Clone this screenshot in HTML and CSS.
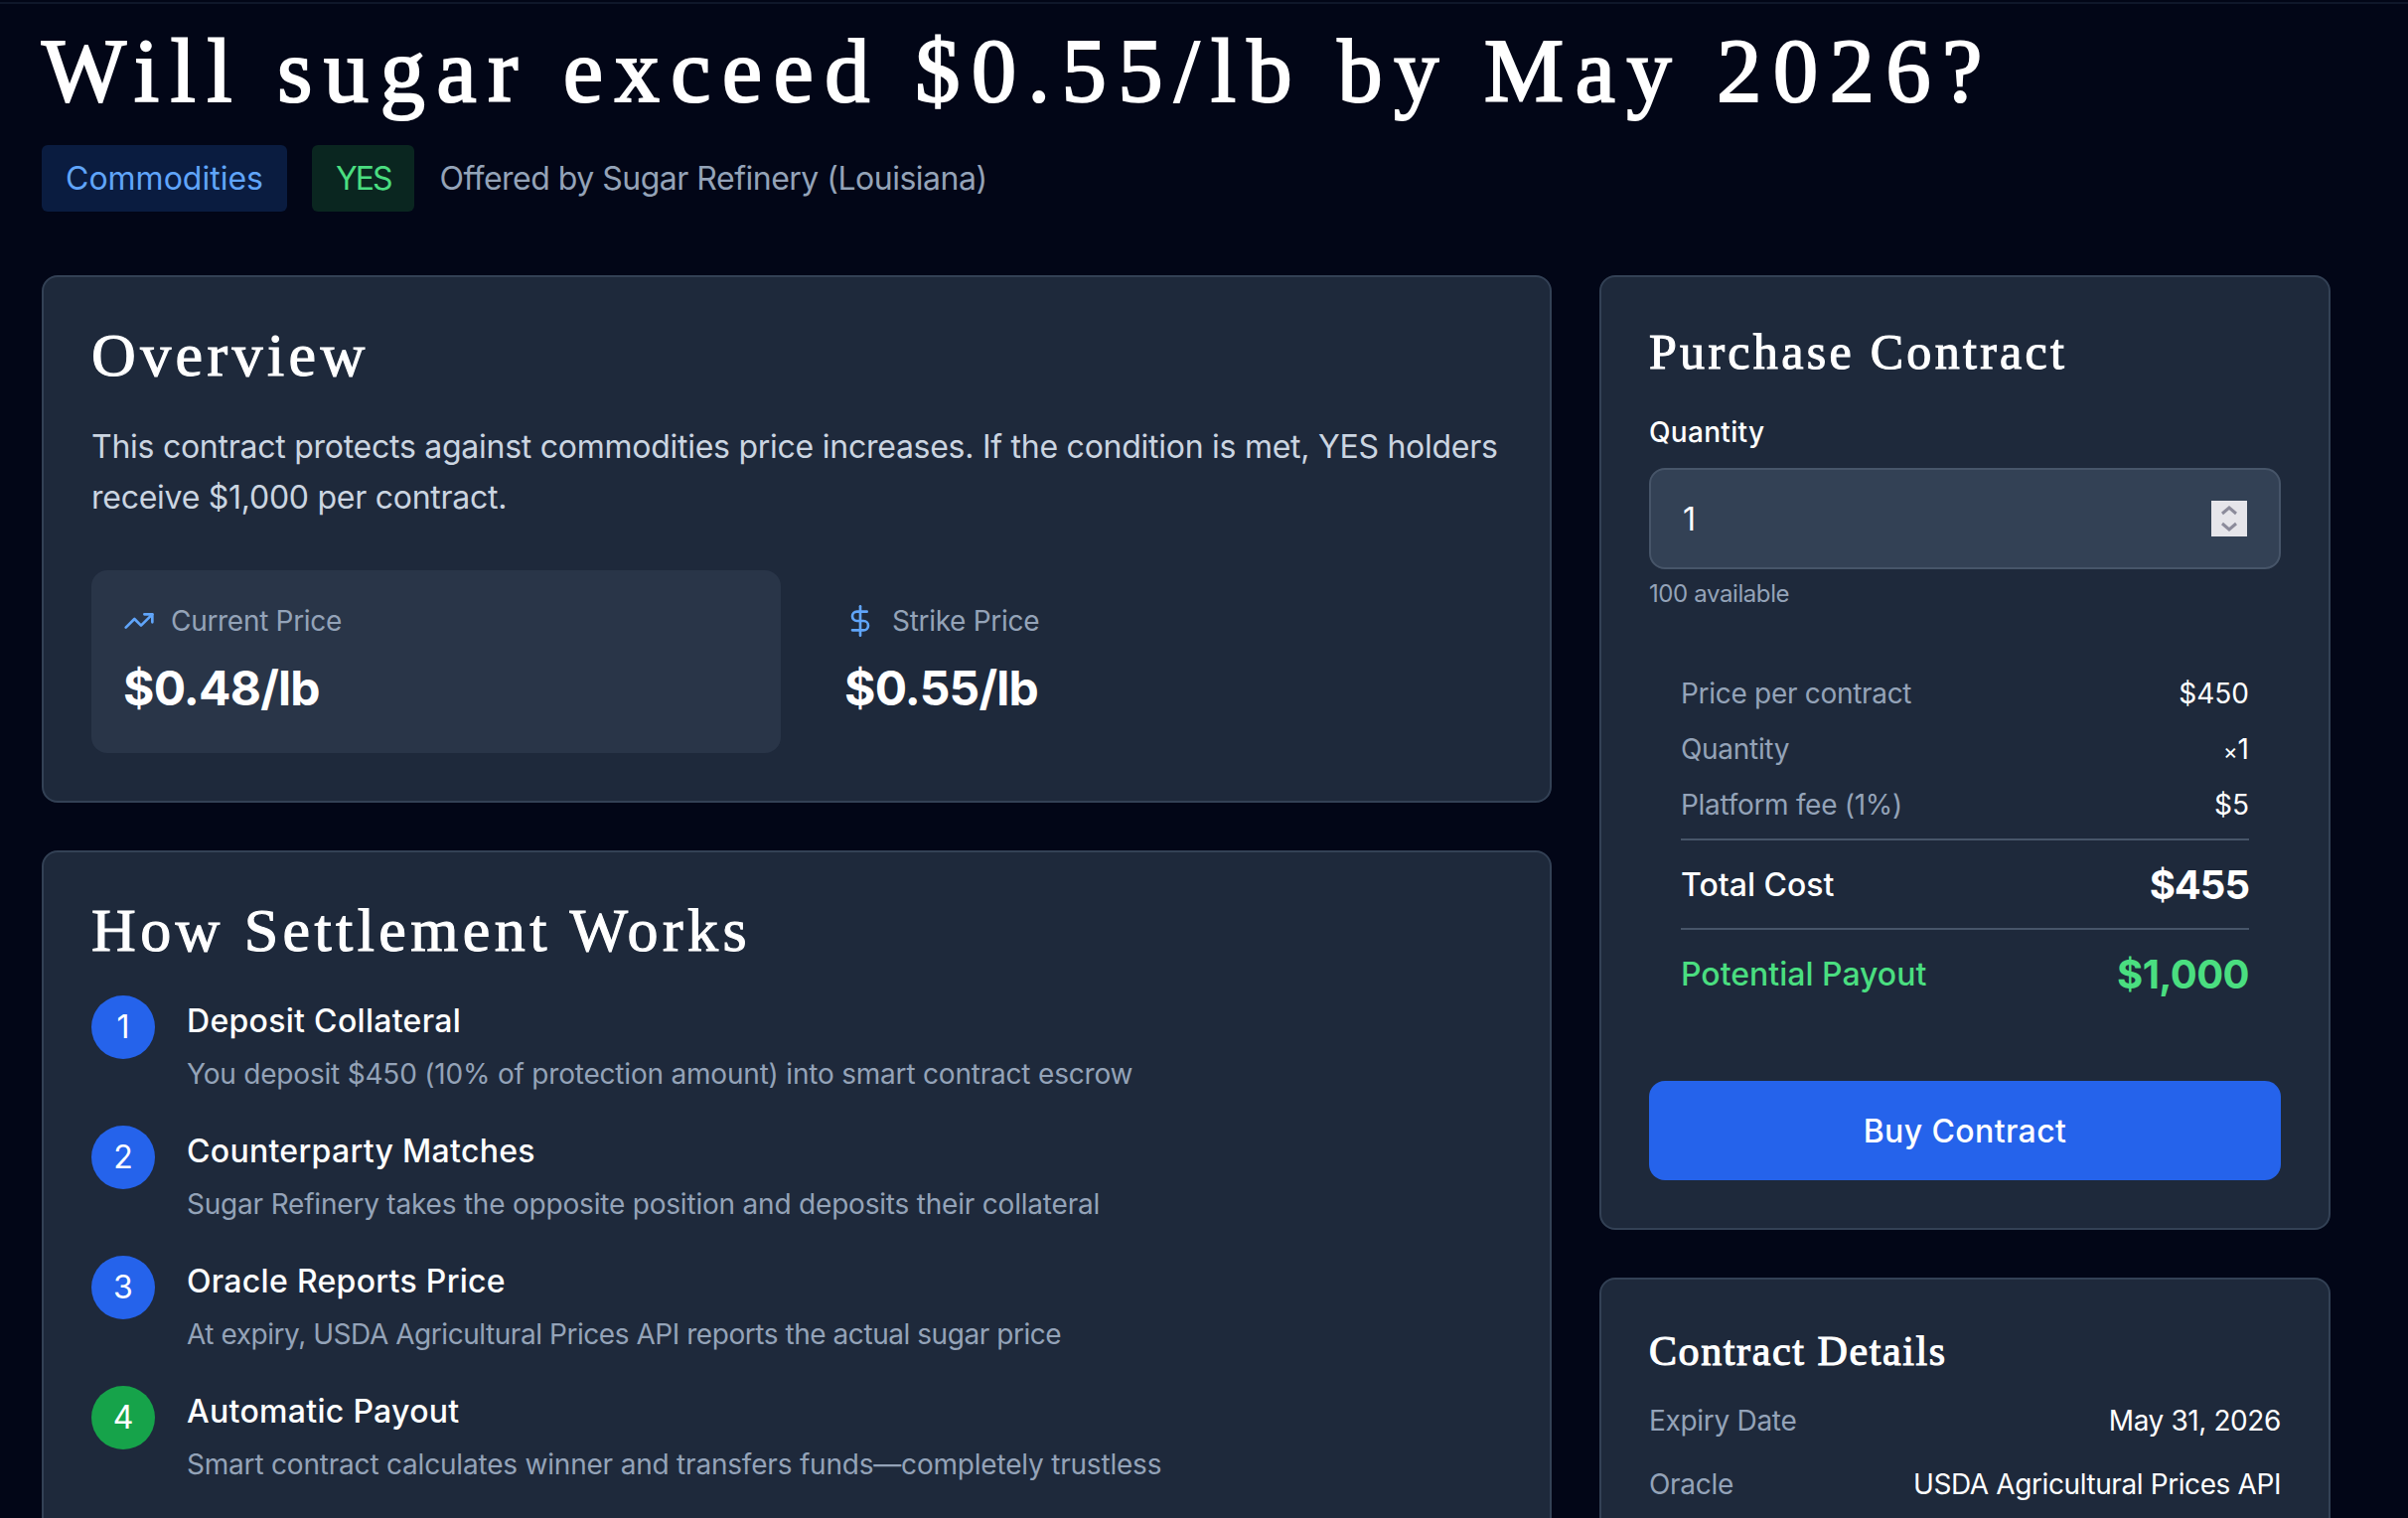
FILE: index.html
```html
<!doctype html>
<html lang="en">

<head>
  <meta charset="utf-8">
  <meta name="viewport" content="width=device-width, initial-scale=1">
  <link rel="stylesheet" href="styles.css">
  <title>Will sugar exceed $0.55/lb by May 2026?</title>
</head>

<body>
  <div class="top-line"></div>
  <div class="page">
    <h1 class="page-title">Will sugar exceed $0.55/lb by May 2026?</h1>
    <div class="meta">
      <span class="tag tag-blue">Commodities</span>
      <span class="tag tag-green">YES</span>
      <span class="offered">Offered by Sugar Refinery (Louisiana)</span>
    </div>

    <div class="columns">
      <div class="col">
        <section class="card">
          <h2 class="title-lg">Overview</h2>
          <p class="intro">This contract protects against commodities price increases. If the condition is met, YES holders receive $1,000 per contract.</p>
          <div class="stats">
            <div class="stat stat-filled">
              <div class="stat-label">
                <svg class="icon" viewBox="0 0 24 24"><polyline points="22 7 13.5 15.5 8.5 10.5 2 17" /><polyline points="16 7 22 7 22 13" /></svg>
                Current Price
              </div>
              <div class="stat-value">$0.48/lb</div>
            </div>
            <div class="stat">
              <div class="stat-label">
                <svg class="icon" viewBox="0 0 24 24"><line x1="12" y1="1" x2="12" y2="23" /><path d="M17 5H9.5a3.5 3.5 0 0 0 0 7h5a3.5 3.5 0 0 1 0 7H6" /></svg>
                Strike Price
              </div>
              <div class="stat-value">$0.55/lb</div>
            </div>
          </div>
        </section>

        <section class="card">
          <h2 class="title-lg">How Settlement Works</h2>
          <ol class="steps">
            <li class="step">
              <span class="step-num">1</span>
              <div class="step-body">
                <div class="step-title">Deposit Collateral</div>
                <div class="step-text">You deposit $450 (10% of protection amount) into smart contract escrow</div>
              </div>
            </li>
            <li class="step">
              <span class="step-num">2</span>
              <div class="step-body">
                <div class="step-title">Counterparty Matches</div>
                <div class="step-text">Sugar Refinery takes the opposite position and deposits their collateral</div>
              </div>
            </li>
            <li class="step">
              <span class="step-num">3</span>
              <div class="step-body">
                <div class="step-title">Oracle Reports Price</div>
                <div class="step-text step-text-tight">At expiry, USDA Agricultural Prices API reports the actual sugar price</div>
              </div>
            </li>
            <li class="step">
              <span class="step-num step-num-green">4</span>
              <div class="step-body">
                <div class="step-title">Automatic Payout</div>
                <div class="step-text">Smart contract calculates winner and transfers funds—completely trustless</div>
              </div>
            </li>
          </ol>
        </section>
      </div>

      <div class="col">
        <section class="card">
          <h2 class="title-md">Purchase Contract</h2>
          <div class="field-label">Quantity</div>
          <div class="qty-input">
            <span>1</span>
            <span class="spinner">
              <svg viewBox="0 0 36 36"><polyline points="11 13 18 7 25 13" /><polyline points="11 23 18 29 25 23" /></svg>
            </span>
          </div>
          <div class="hint">100 available</div>

          <div class="summary">
            <div class="row"><span class="muted">Price per contract</span><span>$450</span></div>
            <div class="row"><span class="muted">Quantity</span><span><span class="times">×</span>1</span></div>
            <div class="row"><span class="muted">Platform fee (1%)</span><span>$5</span></div>
            <div class="row row-total row-first"><span>Total Cost</span><span class="amount">$455</span></div>
            <div class="row row-total row-payout"><span>Potential Payout</span><span class="amount">$1,000</span></div>
          </div>

          <button class="buy-btn">Buy Contract</button>
        </section>

        <section class="card">
          <h2 class="title-sm">Contract Details</h2>
          <div class="details">
            <div class="detail"><span class="muted">Expiry Date</span><span class="detail-value">May 31, 2026</span></div>
            <div class="detail"><span class="muted">Oracle</span><span class="detail-value">USDA Agricultural Prices API</span></div>
          </div>
        </section>
      </div>
    </div>
  </div>
</body>

</html>
```

FILE: styles.css
```css
html,
body {
  height: 1528px;
  overflow: hidden;
}

body {
  margin: 0;
  background-color: #020617;
  color: #fff;
  font-family: "Inter", "Noto Sans", sans-serif;
  font-size: 28px;
}

.top-line {
  height: 2px;
  margin-top: 2px;
  background-color: #0f172a;
}

.page {
  padding: 0 78px 0 42px;
}

.page-title {
  margin: 0;
  padding-top: 26px;
  font-family: "Liberation Serif", serif;
  font-size: 90px;
  line-height: 84px;
  font-weight: 400;
  -webkit-text-stroke: 2.2px #fff;
  letter-spacing: 11.7px;
  white-space: nowrap;
}

.meta {
  display: flex;
  align-items: center;
  gap: 25px;
  margin-top: 32px;
}

.tag {
  padding: 0 24px;
  height: 67px;
  line-height: 67px;
  border-radius: 6px;
  font-size: 32px;
}

.tag-blue {
  background-color: #0a1c40;
  color: #60a5fa;
}

.tag-green {
  background-color: #0a2620;
  color: #4ade80;
  letter-spacing: -2px;
}

.offered {
  color: #94a3b8;
  font-size: 32px;
  letter-spacing: -0.5px;
}

.columns {
  display: grid;
  grid-template-columns: 1520px 736px;
  gap: 48px;
  margin-top: 64px;
}

.col {
  display: flex;
  flex-direction: column;
  gap: 48px;
}

.card {
  background-color: #1e293b;
  border: 2px solid #334155;
  border-radius: 16px;
  padding: 48px;
}

.title-lg,
.title-md,
.title-sm {
  margin: 0;
  font-family: "Liberation Serif", serif;
  font-weight: 400;
  -webkit-text-stroke: 1.1px #fff;
}

.title-lg {
  margin-top: -2px;
  font-size: 62px;
  line-height: 64px;
  letter-spacing: 4.4px;
}

.title-md {
  font-size: 50px;
  line-height: 54px;
  letter-spacing: 3.3px;
}

.title-sm {
  font-size: 42px;
  line-height: 48px;
  letter-spacing: 1.6px;
}

.intro {
  margin: 35px 0 0;
  color: #cbd5e1;
  font-size: 32px;
  line-height: 51px;
  letter-spacing: -0.26px;
}

.stats {
  display: grid;
  grid-template-columns: 1fr 1fr;
  gap: 32px;
  margin-top: 48px;
}

.stat {
  height: 184px;
  padding: 34px 32px;
  box-sizing: border-box;
  border-radius: 16px;
}

.stat-filled {
  background-color: #293548;
}

.stat-label {
  display: flex;
  align-items: center;
  gap: 16px;
  color: #94a3b8;
  font-size: 28px;
  letter-spacing: -0.3px;
}

.icon {
  width: 32px;
  height: 32px;
  fill: none;
  stroke: #60a5fa;
  stroke-width: 2;
  stroke-linecap: round;
  stroke-linejoin: round;
}

.stat-value {
  margin-top: 21px;
  font-size: 48px;
  line-height: 60px;
  font-weight: 700;
  letter-spacing: -0.8px;
}

.steps {
  list-style: none;
  margin: 34px 0 0;
  padding: 0;
}

.step {
  display: flex;
  gap: 32px;
  height: 131px;
}

.step-num {
  flex: none;
  width: 64px;
  height: 64px;
  border-radius: 50%;
  background-color: #2563eb;
  font-size: 32px;
  line-height: 64px;
  text-align: center;
}

.step-num-green {
  background-color: #16a34a;
}

.step-body {
  padding-top: 4px;
}

.step-title {
  font-size: 32px;
  line-height: 44px;
  font-weight: 500;
  letter-spacing: 0.3px;
}

.step-text {
  margin-top: 9px;
  color: #94a3b8;
  font-size: 28px;
  line-height: 44px;
  letter-spacing: -0.2px;
}

.step-text-tight {
  letter-spacing: -0.45px;
}

.field-label {
  margin-top: 34px;
  font-size: 28px;
  line-height: 40px;
  font-weight: 500;
  letter-spacing: 0.3px;
}

.qty-input {
  display: flex;
  align-items: center;
  justify-content: space-between;
  height: 102px;
  margin-top: 16px;
  padding: 0 32px;
  box-sizing: border-box;
  background-color: #334155;
  border: 2px solid #475569;
  border-radius: 16px;
  font-size: 32px;
}

.spinner {
  width: 36px;
  height: 36px;
  background-color: #e6e5ea;
}

.spinner svg {
  display: block;
  width: 36px;
  height: 36px;
  fill: none;
  stroke: #8c8b9b;
  stroke-width: 3;
}

.hint {
  margin-top: 9px;
  color: #94a3b8;
  font-size: 24px;
  line-height: 32px;
  letter-spacing: -0.4px;
}

.summary {
  margin-top: 24px;
  padding: 32px 32px 64px;
}

.row {
  display: flex;
  justify-content: space-between;
  align-items: center;
  height: 56px;
}

.row .muted {
  letter-spacing: -0.3px;
}

.times {
  font-size: 22px;
}

.row-total {
  height: 88px;
  border-top: 2px solid #475569;
  font-size: 32px;
  font-weight: 500;
}

.row-first {
  margin-top: 6px;
}

.row-payout {
  color: #4ade80;
}

.amount {
  font-size: 40px;
  font-weight: 700;
  letter-spacing: -1px;
}

.row-payout .amount {
  letter-spacing: -0.6px;
}

.muted {
  color: #94a3b8;
}

.buy-btn {
  display: block;
  width: 100%;
  height: 100px;
  border: none;
  border-radius: 16px;
  background-color: #2563eb;
  color: #fff;
  font-family: inherit;
  font-size: 32px;
  font-weight: 500;
  letter-spacing: 0.4px;
}

.details {
  margin-top: 14px;
}

.detail {
  display: flex;
  justify-content: space-between;
  height: 64px;
  align-items: center;
}

.detail .muted {
  letter-spacing: -0.3px;
}

.detail-value {
  letter-spacing: -0.4px;
}
```
